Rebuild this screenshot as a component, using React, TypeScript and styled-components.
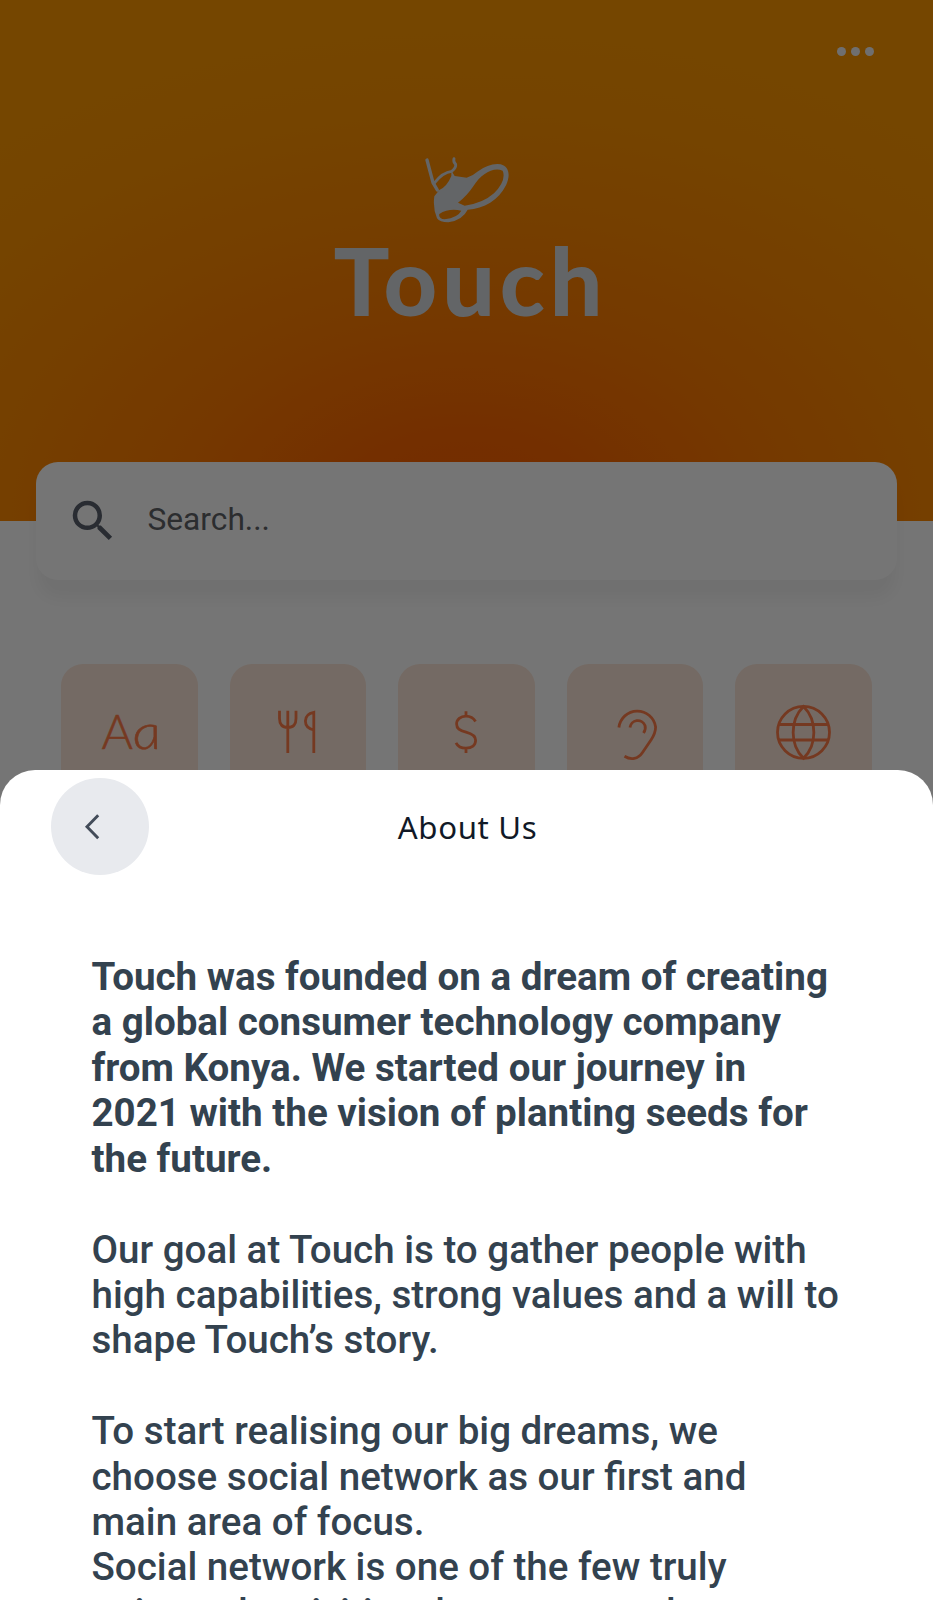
import React from "react";
import styled, { createGlobalStyle } from "styled-components";
import { MdSearch } from "react-icons/md";

const GlobalStyle = createGlobalStyle`
  * { box-sizing: border-box; }
  body { margin: 0; background: #fff; font-family: Roboto, "Liberation Sans", sans-serif; }
`;

const Screen = styled.div`
  position: relative;
  width: 933px;
  height: 1600px;
  overflow: hidden;
  background: #fff;
`;

const Hero = styled.header`
  display: flex;
  flex-direction: column;
  align-items: center;
  height: 521px;
  background: radial-gradient(
    ellipse 760px 510px at 50% 100%,
    #fb5e00 0%,
    #fc6600 16%,
    #ff7a00 38%,
    #ff8900 60%,
    #ff9400 80%,
    #ff9900 100%
  );
`;

const HeroBar = styled.div`
  display: flex;
  justify-content: flex-end;
  align-items: center;
  width: 100%;
  height: 102px;
  padding-right: 59px;
`;

const MoreButton = styled.button`
  display: flex;
  gap: 4.8px;
  padding: 0;
  border: 0;
  background: none;
`;

const Dot = styled.span`
  width: 9px;
  height: 9px;
  border-radius: 50%;
  background: #f2f2f5;
`;

const HandLogo = styled.svg`
  display: block;
  width: 130px;
  height: 95px;
  margin: 38px 4px 0 0;
  color: #d8dde1;
`;

const Wordmark = styled.h1`
  margin: -7px 0 0 8px;
  font-family: Lato, sans-serif;
  font-weight: 900;
  font-size: 93px;
  line-height: 104px;
  letter-spacing: 5px;
  color: #d8dde1;
`;

const SearchCard = styled.label`
  position: relative;
  display: flex;
  align-items: center;
  gap: 27.5px;
  height: 118px;
  margin: -59px 36px 0;
  padding-left: 30px;
  border-radius: 22px;
  background: #fff;
  box-shadow: 0 20px 18px -2px rgba(0, 0, 0, 0.05);
  color: #59616d;
`;

const SearchText = styled.span`
  font-size: 31.7px;
  line-height: 40px;
  color: #5f6268;
  margin-top: -3px;
`;

const Tiles = styled.nav`
  display: grid;
  grid-template-columns: repeat(5, 136.6px);
  justify-content: space-between;
  margin: 84px 61px 0;
`;

const Tile = styled.div`
  display: flex;
  align-items: center;
  justify-content: center;
  height: 136px;
  border-radius: 22px;
  background: #fde7d9;
  color: #ff7c48;
`;

const TileIcon = styled.svg`
  width: 60px;
  height: 60px;
  fill: none;
  stroke: currentColor;
  stroke-width: 2.8;
`;

const TileText = styled.span`
  display: flex;
  gap: 1px;
  margin: -2px 0 0 1px;
  font-family: Lato, sans-serif;
  font-weight: 300;
  font-size: 48px;
  line-height: 60px;
  -webkit-text-stroke: 0.5px currentColor;
`;

const SlopedLetter = styled.em`
  display: block;
  transform: skewX(9deg) scaleX(1.2);
`;

const Backdrop = styled.div`
  position: absolute;
  inset: 0;
  background: rgba(0, 0, 0, 0.54);
`;

const Sheet = styled.section`
  position: absolute;
  top: 770px;
  left: 0;
  right: 0;
  bottom: 0;
  overflow: hidden;
  border-radius: 35px 35px 0 0;
  background: #fff;
`;

const SheetHeader = styled.div`
  display: grid;
  grid-template-columns: 97.5px 1fr 97.5px;
  align-items: center;
  padding: 7.5px 51px 0;
`;

const BackButton = styled.button`
  display: block;
  width: 97.5px;
  height: 97.5px;
  padding: 0;
  border: 0;
  border-radius: 50%;
  background: #e8eaee;
  color: #434c59;
`;

const Chevron = styled.svg`
  display: block;
  width: 97.5px;
  height: 97.5px;
`;

const SheetTitle = styled.h2`
  margin: 0;
  padding: 2px 0 0 2px;
  font-family: "Noto Sans", sans-serif;
  font-weight: 400;
  font-size: 31.2px;
  line-height: 40px;
  letter-spacing: 0.65px;
  text-align: center;
  color: #111927;
`;

const Story = styled.div`
  padding: 79px 60px 0 91.5px;
  color: #33424f;
`;

const Paragraph = styled.p<{ $lead?: boolean }>`
  margin: 0 0 45.42px;
  font-size: 38.55px;
  line-height: 45.42px;
  font-weight: ${(p) => (p.$lead ? 700 : 500)};
  white-space: pre-line;
`;

export default function App() {
  return (
    <Screen>
      <GlobalStyle />
      <Hero>
        <HeroBar>
          <MoreButton aria-label="More">
            <Dot />
            <Dot />
            <Dot />
          </MoreButton>
        </HeroBar>
        <HandLogo viewBox="0 0 390 285" fill="none" stroke="currentColor" strokeLinecap="round" strokeLinejoin="round">
          <path d="M81 60 L99 128 L112 150" strokeWidth="10" />
          <path d="M162 56 Q159 66 167 73 Q169 84 155 94 Q128 97 104 128" strokeWidth="8.5" />
          <path
            d="M154 92 L164 108 L200 113 Q218 108 232 95 Q270 68 302 73 C326 80 333 103 318 136 C296 181 252 207 203 209 Q188 240 145 247 Q119 247 111 235 Q98 205 103 169 L118 150 Q141 140 154 108 Z M308 92 C279 79 242 104 221 137 Q201 167 174 188 L194 197 Q247 191 282 160 Q320 120 308 92 Z M184 212 Q146 204 118 222 Q115 236 134 238 Q173 233 184 212 Z"
            fill="currentColor"
            fillRule="evenodd"
            stroke="none"
          />
        </HandLogo>
        <Wordmark>Touch</Wordmark>
      </Hero>

      <SearchCard>
        <MdSearch size={54} />
        <SearchText>Search...</SearchText>
      </SearchCard>

      <Tiles>
        <Tile>
          <TileText>
            A<SlopedLetter>a</SlopedLetter>
          </TileText>
        </Tile>
        <Tile>
          <TileIcon viewBox="0 0 60 60">
            <path d="M11.5 8.8V16.5Q11.5 25.5 19.8 25.5T28 16.5V8.8M19.8 8.8V51M45.8 51V10.3Q37.4 12 37.4 19T45.8 28" />
          </TileIcon>
        </Tile>
        <Tile>
          <TileIcon viewBox="0 0 60 60">
            <path d="M39.5 19.5C37.5 16 34 14.2 30 14.2C24.5 14.2 20.6 17.5 20.6 22C20.6 26.5 23.5 28.4 30 30.1C36.5 31.8 39.6 34 39.6 38.3C39.6 43.2 35.8 46.2 30 46.2C25 46.2 21.7 44.2 20 40.8M30 9.3V14.2M30 46.2V51" />
          </TileIcon>
        </Tile>
        <Tile>
          <TileIcon viewBox="0 0 60 60">
            <path d="M13.9 25.5A18.5 18.5 0 0 1 50.6 25C50.6 30 49 33.5 46 38L37.5 50.5C33 57.2 26 58.3 19.5 54.3M25 25.5A7.8 7.8 0 0 1 40 23.5C40.8 26 40.3 28.5 38.5 31" />
          </TileIcon>
        </Tile>
        <Tile>
          <TileIcon viewBox="0 0 60 60">
            <circle cx="29.5" cy="30.3" r="26" />
            <path d="M29.5 4.5C15.7 18 15.7 43 29.5 56.3C43.3 43 43.3 18 29.5 4.5ZM4.7 22.5H54.2M4.7 38H54.2" />
          </TileIcon>
        </Tile>
      </Tiles>

      <Backdrop />

      <Sheet>
        <SheetHeader>
          <BackButton aria-label="Back">
            <Chevron viewBox="0 0 97.5 97.5" fill="none" stroke="currentColor" strokeWidth="2.9">
              <path d="M47.2 37.2L36 48.7L47.2 60.2" />
            </Chevron>
          </BackButton>
          <SheetTitle>About Us</SheetTitle>
        </SheetHeader>
        <Story>
          <Paragraph $lead>
            {`Touch was founded on a dream of creating
a global consumer technology company
from Konya. We started our journey in
2021 with the vision of planting seeds for
the future.`}
          </Paragraph>
          <Paragraph>
            {`Our goal at Touch is to gather people with
high capabilities, strong values and a will to
shape Touch’s story.`}
          </Paragraph>
          <Paragraph>
            {`To start realising our big dreams, we
choose social network as our first and
main area of focus.
Social network is one of the few truly
universal activities that everyone has`}
          </Paragraph>
        </Story>
      </Sheet>
    </Screen>
  );
}
